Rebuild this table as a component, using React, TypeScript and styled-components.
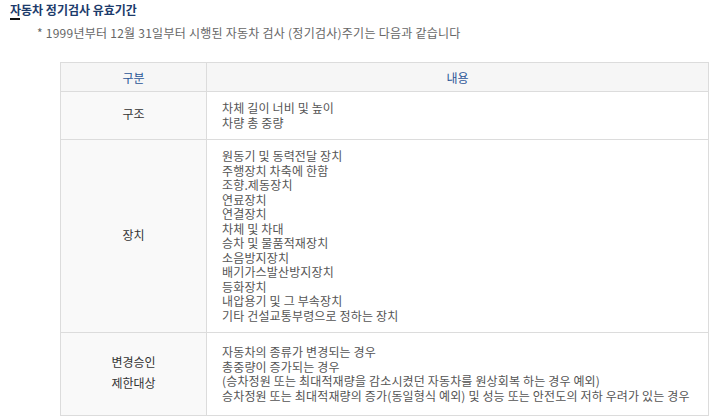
import styled, { createGlobalStyle } from "styled-components";

const GlobalStyle = createGlobalStyle`
  body {
    margin: 0;
    background: #fff;
    font-family: "Noto Sans CJK KR", "Noto Sans", sans-serif;
  }
`;

const rows = [
  { head: ["구조"], pad: 9, items: ["차체 길이 너비 및 높이", "차량 총 중량"] },
  {
    head: ["장치"],
    pad: 9,
    items: [
      "원동기 및 동력전달 장치",
      "주행장치 차축에 한함",
      "조향.제동장치",
      "연료장치",
      "연결장치",
      "차체 및 차대",
      "승차 및 물품적재장치",
      "소음방지장치",
      "배기가스발산방지장치",
      "등화장치",
      "내압용기 및 그 부속장치",
      "기타 건설교통부령으로 정하는 장치",
    ],
  },
  {
    head: ["변경승인", "제한대상"],
    pad: 12,
    items: [
      "자동차의 종류가 변경되는 경우",
      "총중량이 증가되는 경우",
      "(승차정원 또는 최대적재량을 감소시켰던 자동차를 원상회복 하는 경우 예외)",
      "승차정원 또는 최대적재량의 증가(동일형식 예외) 및 성능 또는 안전도의 저하 우려가 있는 경우",
    ],
  },
];

const App = () => {
  return (
    <>
      <GlobalStyle />
      <Page>
        <Title>자동차 정기검사 유효기간</Title>
        <TitleBar />
        <Note>* 1999년부터 12월 31일부터 시행된 자동차 검사 (정기검사)주기는 다음과 같습니다</Note>
        <Table>
          <colgroup>
            <col style={{ width: 146 }} />
            <col />
          </colgroup>
          <thead>
            <tr>
              <Th>구분</Th>
              <Th>내용</Th>
            </tr>
          </thead>
          <tbody>
            {rows.map((row) => (
              <tr key={row.head[0]}>
                <HeadCell>
                  {row.head.map((h) => (
                    <HeadLine key={h}>{h}</HeadLine>
                  ))}
                </HeadCell>
                <BodyCell $pad={row.pad}>{row.items.join("\n")}</BodyCell>
              </tr>
            ))}
          </tbody>
        </Table>
      </Page>
    </>
  );
};

export default App;

// styled-components
const Page = styled.div`
  padding: 1px 0 0 10px;
  width: 700px;
`;

const Title = styled.h2`
  margin: 0;
  font-size: 12px;
  line-height: 17px;
  font-weight: bold;
  color: #1d3b6b;
`;

const TitleBar = styled.div`
  width: 10px;
  height: 2px;
  background: #111;
`;

const Note = styled.p`
  margin: 4px 0 0 27px;
  font-size: 12px;
  letter-spacing: 0.25px;
  line-height: 18px;
  color: #666;
`;

const Table = styled.table`
  margin: 20px 0 0 50px;
  width: 649px;
  border-collapse: collapse;
  table-layout: fixed;
  font-size: 12px;
`;

const Th = styled.th`
  height: 28px;
  padding: 0;
  background: #f6f6f6;
  border: 1px solid #dcdcdc;
  color: #2a5596;
  font-size: 12px;
  font-weight: normal;
  text-align: center;
`;

const HeadCell = styled.td`
  padding: 0 0 4px;
  background: #f9f9f9;
  border: 1px solid #dcdcdc;
  color: #333;
  font-size: 12px;
  text-align: center;
  vertical-align: middle;
`;

const HeadLine = styled.div`
  line-height: 21px;
`;

const BodyCell = styled.td<{ $pad: number }>`
  padding: ${(p) => p.$pad}px 15px;
  background: #fff;
  border: 1px solid #dcdcdc;
  color: #555;
  letter-spacing: 0.15px;
  line-height: 14.5px;
  white-space: pre;
  vertical-align: middle;
`;
